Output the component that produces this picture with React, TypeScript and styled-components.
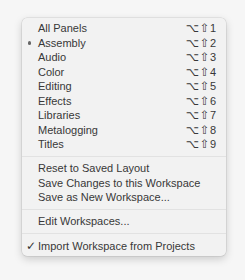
import styled, { createGlobalStyle } from "styled-components";

const GlobalStyle = createGlobalStyle`
  body {
    margin: 0;
    background: #f6f6f6;
    font-family: "Liberation Sans", Arial, sans-serif;
  }
`;

type Item = { label: string; shortcut?: string; mark?: "dot" | "check" };

const groups: Item[][] = [
  [
    { label: "All Panels", shortcut: "1" },
    { label: "Assembly", shortcut: "2", mark: "dot" },
    { label: "Audio", shortcut: "3" },
    { label: "Color", shortcut: "4" },
    { label: "Editing", shortcut: "5" },
    { label: "Effects", shortcut: "6" },
    { label: "Libraries", shortcut: "7" },
    { label: "Metalogging", shortcut: "8" },
    { label: "Titles", shortcut: "9" },
  ],
  [
    { label: "Reset to Saved Layout" },
    { label: "Save Changes to this Workspace" },
    { label: "Save as New Workspace..." },
  ],
  [{ label: "Edit Workspaces..." }],
  [{ label: "Import Workspace from Projects", mark: "check" }],
];

export default function App() {
  return (
    <>
      <GlobalStyle />
      <Page>
        <Menu>
          {groups.map((group, gi) => (
            <Group key={gi}>
              {gi > 0 && <Separator />}
              {group.map((item) => (
                <Row key={item.label}>
                  <Marker>
                    {item.mark === "dot" && <Dot />}
                    {item.mark === "check" && <Check>✓</Check>}
                  </Marker>
                  <Label>{item.label}</Label>
                  {item.shortcut && (
                    <Shortcut>
                      <Glyph>⌥</Glyph>
                      <Glyph>⇧</Glyph>
                      {item.shortcut}
                    </Shortcut>
                  )}
                </Row>
              ))}
            </Group>
          ))}
        </Menu>
      </Page>
    </>
  );
}

const Page = styled.div`
  padding: 18px 0 0 22px;
  height: 280px;
  box-sizing: border-box;
`;

const Menu = styled.div`
  width: 204px;
  padding: 3px 0 3px;
  box-sizing: border-box;
  background: #f2f2f2;
  border-radius: 5px;
  box-shadow: 0 0 0 0.5px rgba(0, 0, 0, 0.12), 0 3px 9px rgba(0, 0, 0, 0.18);
`;

const Group = styled.div`
  display: flex;
  flex-direction: column;
`;

const Separator = styled.div`
  height: 1px;
  margin: 4px 0 4.6px;
  background: #e2e2e2;
`;

const Row = styled.div`
  display: grid;
  grid-template-columns: 16px 1fr auto;
  align-items: center;
  height: 14.5px;
  padding-right: 10px;
  font-size: 11px;
  color: #383838;
`;

const Marker = styled.div`
  display: flex;
  align-items: center;
  padding-left: 5px;
`;

const Dot = styled.span`
  width: 3.5px;
  height: 3.5px;
  margin-left: 0.5px;
  border-radius: 50%;
  background: #666;
`;

const Check = styled.span`
  font-family: "DejaVu Sans", sans-serif;
  font-size: 12px;
  margin-left: -1px;
  color: #333;
`;

const Label = styled.span`
  white-space: nowrap;
`;

const Shortcut = styled.span`
  display: flex;
  align-items: center;
  gap: 0.5px;
`;

const Glyph = styled.span`
  font-family: "DejaVu Sans", sans-serif;
  font-size: 11.5px;
`;
